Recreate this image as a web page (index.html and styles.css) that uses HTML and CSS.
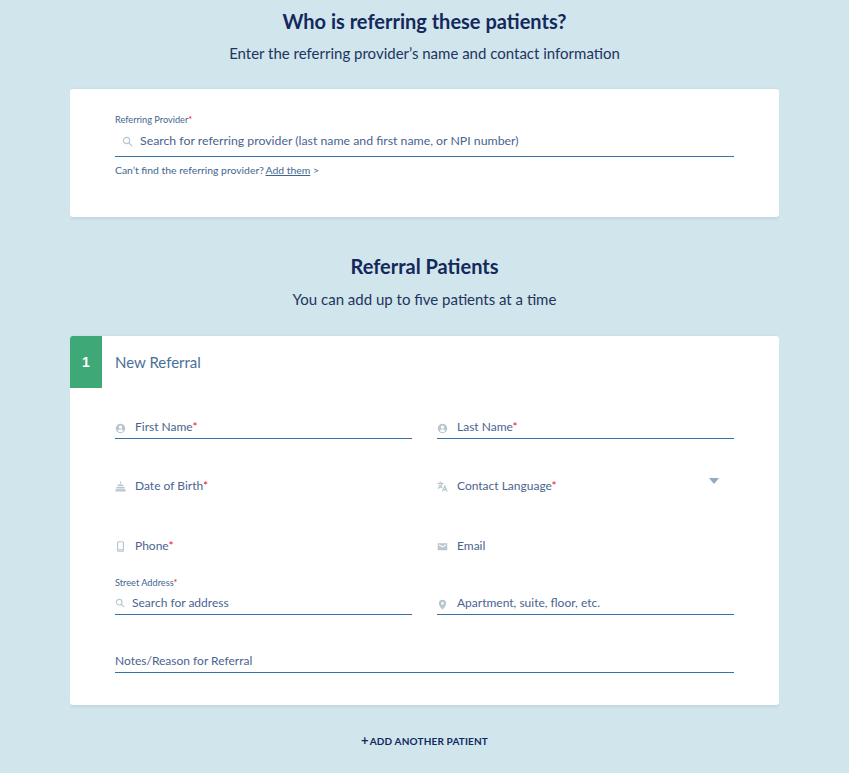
FILE: index.html
```html
<!DOCTYPE html>
<html lang="en">
<head>
    <meta charset="UTF-8">
    <meta name="viewport" content="width=device-width, initial-scale=1.0">
    <title>New Referral</title>
    <link rel="stylesheet" href="styles.css">
</head>
<body>
    <div class="page">
        <h1>Who is referring these patients?</h1>
        <p class="sub">Enter the referring provider’s name and contact information</p>

        <div class="card provider-card">
            <div class="small-label">Referring Provider<span class="req">*</span></div>
            <div class="field provider-field">
                <svg class="icon search-icon" viewBox="0 0 12 12"><circle cx="5" cy="5" r="3.4"/><path d="M7.6 7.6l3.4 3.4"/></svg>
                <span>Search for referring provider (last name and first name, or NPI number)</span>
            </div>
            <p class="hint">Can’t find the referring provider? <a href="#">Add them</a> &gt;</p>
        </div>

        <h2>Referral Patients</h2>
        <p class="sub">You can add up to five patients at a time</p>

        <div class="card patient-card">
            <div class="patient-head">
                <div class="badge">1</div>
                <div class="patient-title">New Referral</div>
            </div>
            <div class="patient-grid">
                <div class="field line">
                    <svg class="icon fill" viewBox="0 0 12 12"><path fill-rule="evenodd" d="M6 .8a5.2 5.2 0 1 0 0 10.400A5.200 5.200 0 0 0 6 .8zm0 1.900a1.800 1.800 0 1 1 0 3.600 1.800 1.800 0 0 1 0-3.600zm0 7.300a4 4 0 0 1-3.200-1.600c.4-.8 2-1.300 3.200-1.300s2.800.5 3.200 1.300A4 4 0 0 1 6 10z"/></svg>
                    <span>First Name<span class="req">*</span></span>
                </div>
                <div class="field line">
                    <svg class="icon fill" viewBox="0 0 12 12"><path fill-rule="evenodd" d="M6 .8a5.2 5.2 0 1 0 0 10.400A5.200 5.200 0 0 0 6 .8zm0 1.900a1.800 1.800 0 1 1 0 3.600 1.800 1.800 0 0 1 0-3.600zm0 7.300a4 4 0 0 1-3.200-1.600c.4-.8 2-1.300 3.200-1.300s2.800.5 3.200 1.300A4 4 0 0 1 6 10z"/></svg>
                    <span>Last Name<span class="req">*</span></span>
                </div>

                <div class="field">
                    <svg class="icon fill" viewBox="0 0 12 12"><path d="M5.400 .5h1.200v2.500H5.400zM3 3.800h6v2H3zM1.500 6.500h9v1.700h-9zM.5 9h11v2.500H.5z"/></svg>
                    <span>Date of Birth<span class="req">*</span></span>
                </div>
                <div class="field">
                    <svg class="icon translate" viewBox="0 0 12 12"><path d="M.5 2.500h6.500M3.700 .8v1.700M5.700 2.500C5.200 5 3.300 7 .8 8.200M2.200 4c.8 1.800 2 3 3.500 3.800M6 11.500l2.500-6 2.500 6M7 9.500h3"/></svg>
                    <span>Contact Language<span class="req">*</span></span>
                    <svg class="caret" viewBox="0 0 10 6"><path d="M0 0h10L5 6z"/></svg>
                </div>

                <div class="field">
                    <svg class="icon phone" viewBox="0 0 12 12"><rect x="2.800" y=".8" width="6.400" height="10.400" rx="1"/><path d="M3 9.600h6"/></svg>
                    <span>Phone<span class="req">*</span></span>
                </div>
                <div class="field">
                    <svg class="icon fill" viewBox="0 0 12 12"><path fill-rule="evenodd" d="M.8 2.500h10.400v7.500H.8zM2 3.500V5l4 2.200L10 5V3.500L6 5.700z"/></svg>
                    <span>Email</span>
                </div>

                <div class="field line street">
                    <div class="small-label street-label">Street Address<span class="req">*</span></div>
                    <svg class="icon search-icon small" viewBox="0 0 12 12"><circle cx="5" cy="5" r="3.400"/><path d="M7.600 7.600l3.400 3.400"/></svg>
                    <span>Search for address</span>
                </div>
                <div class="field line">
                    <svg class="icon fill" viewBox="0 0 12 12"><path fill-rule="evenodd" d="M6 .8a4 4 0 0 0-4 4C2 7.800 6 11.500 6 11.500s4-3.700 4-6.700a4 4 0 0 0-4-4zm0 5.400a1.400 1.400 0 1 1 0-2.800 1.400 1.400 0 0 1 0 2.800z"/></svg>
                    <span>Apartment, suite, floor, etc.</span>
                </div>

                <div class="field line notes">
                    <span>Notes/Reason for Referral</span>
                </div>
            </div>
        </div>

        <a class="add-link" href="#"><span class="plus">+</span>ADD ANOTHER PATIENT</a>
    </div>
</body>
</html>
```

FILE: styles.css
```css
body, html {
    font-family: Lato, "Open Sans", sans-serif;
    margin: 0;
    padding: 0;
    background-color: #d0e5ec;
    color: #14285c;
}
.page {
    width: 709px;
    margin: 0 auto;
    padding: 8px 0 0 0;
    box-sizing: border-box;
    height: 773px;
    overflow: hidden;
}
h1, h2 {
    margin: 0;
    text-align: center;
    font-weight: 700;
    font-size: 20px;
    line-height: 26px;
}
h2 {
    margin: 36px 0 10px;
}
.sub {
    margin: 9px 0 0;
    text-align: center;
    font-size: 15px;
    line-height: 20px;
    color: #1f3460;
}
.card {
    background: white;
    border-radius: 3px;
    box-shadow: 0 1px 4px rgba(0, 0, 0, 0.1);
}
.provider-card {
    margin-top: 26px;
    height: 128px;
    padding: 25px 45px 0;
    box-sizing: border-box;
}
.small-label {
    font-size: 9.2px;
    line-height: 12px;
    color: #3f6690;
}
.req {
    color: #f0102a;
}
.field {
    display: flex;
    align-items: center;
    height: 22px;
    padding-bottom: 2px;
    font-size: 12px;
    color: #4a6490;
    position: relative;
    box-sizing: border-box;
}
.line {
    border-bottom: 1px solid #3572a5;
}
.provider-field {
    height: 31px;
    border-bottom: 1px solid #3572a5;
    font-size: 12.3px;
}
.hint {
    margin: 6px 0 0;
    font-size: 10.4px;
    line-height: 14px;
    color: #3f6690;
}
.hint a {
    color: #3f6690;
    margin-left: -1px;
}
.icon {
    width: 11px;
    height: 11px;
    flex: none;
    margin-right: 9px;
    margin-top: 3px;
}
.icon.fill {
    fill: #b7c6cf;
}
.search-icon, .translate, .phone {
    fill: none;
    stroke: #b7c6cf;
    stroke-width: 1.3;
}
.search-icon {
    margin-left: 7px;
    margin-right: 7px;
}
.search-icon.small {
    width: 10px;
    height: 10px;
    margin-left: 0;
    margin-right: 7px;
    margin-top: 0;
}
.patient-card {
    margin-top: 27px;
    height: 369px;
}
.patient-head {
    display: flex;
    align-items: flex-start;
}
.badge {
    width: 32px;
    height: 52px;
    display: flex;
    align-items: center;
    justify-content: center;
    background: #3fa877;
    color: white;
    font-family: "Liberation Sans", sans-serif;
    font-weight: 700;
    font-size: 14px;
    border-top-left-radius: 3px;
}
.patient-title {
    margin-left: 13px;
    line-height: 52px;
    font-size: 15px;
    color: #4a6f98;
}
.patient-grid {
    margin: 29px 45px 0;
    display: grid;
    grid-template-columns: 297px 297px;
    column-gap: 25px;
    grid-template-rows: 58px 60px 58px 58px 22px;
    align-items: start;
}
.street-label {
    position: absolute;
    left: 0;
    top: -16px;
}
.notes {
    grid-column: 1 / 3;
}
.caret {
    position: absolute;
    right: 15px;
    top: 3px;
    width: 10px;
    height: 6px;
    fill: #8fabc4;
}
.add-link {
    display: block;
    margin-top: 26px;
    text-align: center;
    font-size: 10px;
    font-weight: 700;
    line-height: 18px;
    color: #14285c;
    text-decoration: none;
    letter-spacing: 0.15px;
}
.plus {
    font-size: 13px;
    margin-right: 1px;
}
```
